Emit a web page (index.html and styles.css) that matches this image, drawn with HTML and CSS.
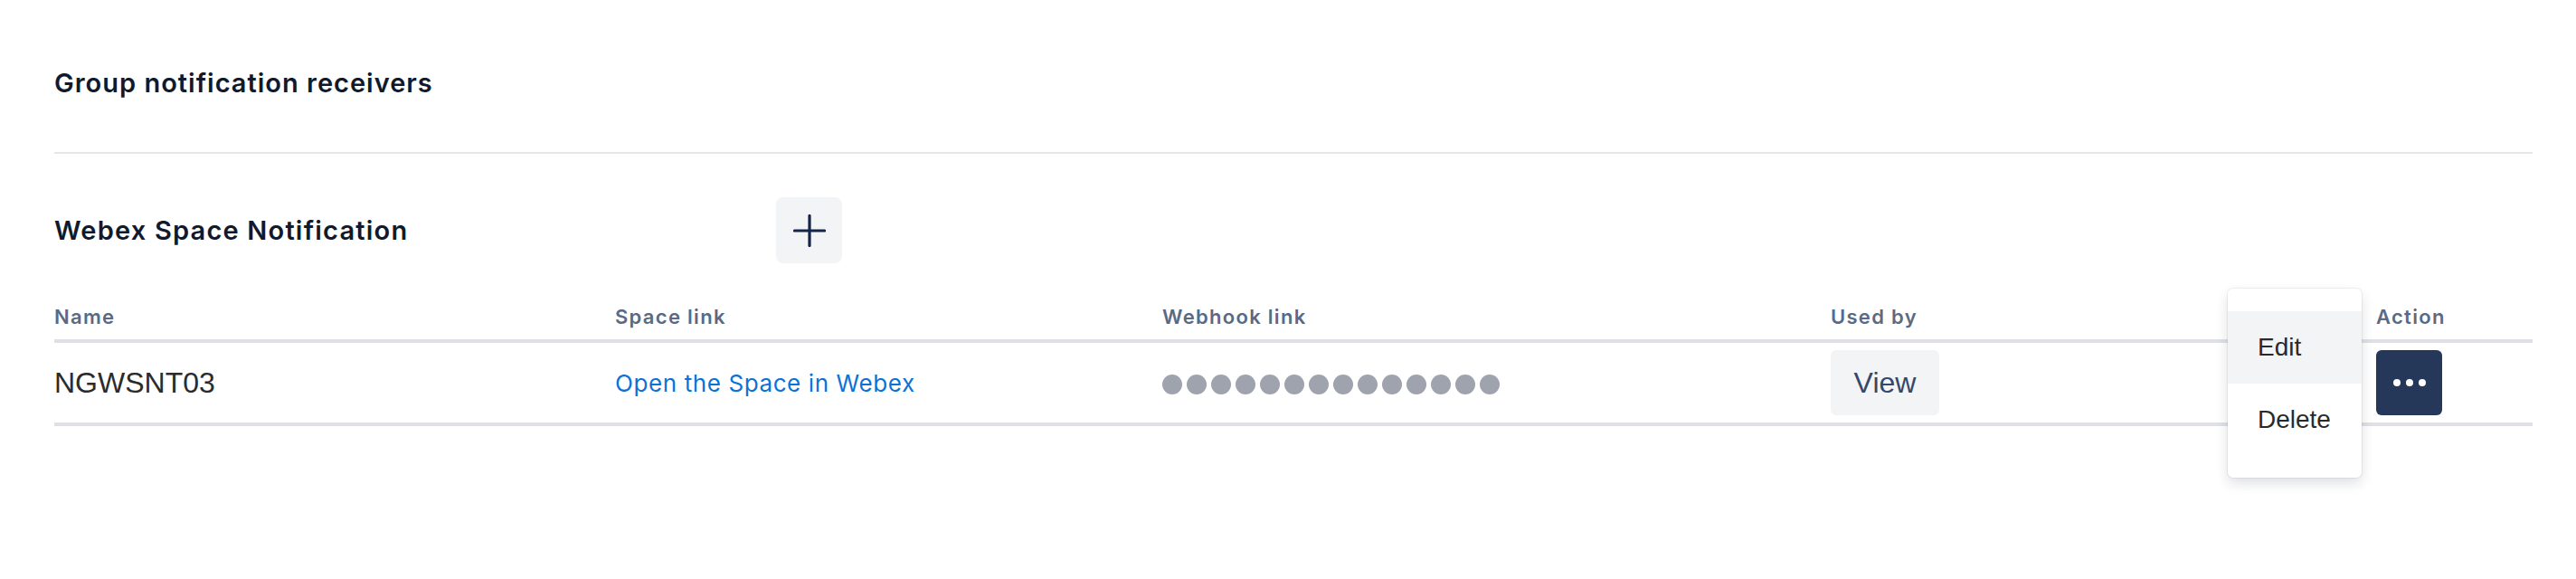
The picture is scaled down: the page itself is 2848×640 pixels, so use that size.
FILE: index.html
```html
<!DOCTYPE html>
<html lang="en">
<head>
<meta charset="utf-8">
<title>Group notification receivers</title>
<link rel="stylesheet" href="styles.css">
</head>
<body>
<main class="page">
  <section class="group-head">
    <h2 class="group-title">Group notification receivers</h2>
  </section>
  <section class="webex">
    <div class="webex-head">
      <h3 class="webex-title">Webex Space Notification</h3>
      <button class="add-btn" type="button" aria-label="Add">
        <svg width="36" height="36" viewBox="0 0 36 36"><path d="M18 1.5V34.5M1.5 18H34.5" stroke="#14264a" stroke-width="3.2" stroke-linecap="round" fill="none"/></svg>
      </button>
    </div>
    <div class="table">
      <div class="row head">
        <div class="cell">Name</div>
        <div class="cell">Space link</div>
        <div class="cell">Webhook link</div>
        <div class="cell">Used by</div>
        <div class="cell">Action</div>
      </div>
      <div class="row body">
        <div class="cell name">NGWSNT03</div>
        <div class="cell"><a class="link" href="#">Open the Space in Webex</a></div>
        <div class="cell"><span class="dots"><i></i><i></i><i></i><i></i><i></i><i></i><i></i><i></i><i></i><i></i><i></i><i></i><i></i><i></i></span></div>
        <div class="cell"><button class="view-btn" type="button">View</button></div>
        <div class="cell action">
          <button class="more-btn" type="button" aria-label="More"><span></span><span></span><span></span></button>
          <div class="menu">
            <div class="menu-item active">Edit</div>
            <div class="menu-item">Delete</div>
          </div>
        </div>
      </div>
    </div>
  </section>
</main>
</body>
</html>
```
FILE: styles.css
```css
html, body {
  margin: 0;
  padding: 0;
  background: #ffffff;
}
body {
  font-family: Inter, "Noto Sans", sans-serif;
  min-height: 640px;
}
.page {
  padding-left: 60px;
  padding-bottom: 160px;
  width: 2740px;
}
.group-head {
  padding-top: 74px;
  padding-bottom: 58px;
  border-bottom: 2px solid #e6e6e8;
}
.group-title {
  margin: 0;
  font-size: 29px;
  line-height: 36px;
  font-weight: 600;
  letter-spacing: 1px;
  color: #111a2c;
}
.webex {
  padding-top: 48px;
}
.webex-head {
  display: flex;
  align-items: center;
  height: 73px;
}
.webex-title {
  margin: 0;
  width: 798px;
  font-size: 29px;
  line-height: 36px;
  font-weight: 600;
  letter-spacing: 1.2px;
  color: #111a2c;
}
.add-btn {
  width: 73px;
  height: 73px;
  border: 0;
  border-radius: 8px;
  background: #f3f4f6;
  display: flex;
  align-items: center;
  justify-content: center;
  padding: 0;
}
.table {
  margin-top: 45px;
}
.row {
  display: grid;
  grid-template-columns: 620px 605px 739px 603px 173px;
}
.row.head {
  padding-bottom: 11px;
  border-bottom: 4px solid #dfe0e6;
}
.row.head .cell {
  font-size: 22px;
  line-height: 28px;
  font-weight: 600;
  letter-spacing: 1.3px;
  color: #5a6a85;
}
.row.body {
  height: 88px;
  align-items: center;
  border-bottom: 4px solid #dfe0e6;
}
.cell {
  display: flex;
  align-items: center;
}
.name {
  font-family: "Liberation Sans", Arial, sans-serif;
  font-size: 32px;
  color: #2b2b2b;
}
.link {
  font-size: 26px;
  color: #0b72d6;
  text-decoration: none;
  letter-spacing: 0.6px;
}
.dots {
  display: flex;
  gap: 5px;
  padding-top: 4px;
}
.dots i {
  display: block;
  width: 22px;
  height: 22px;
  border-radius: 50%;
  background: #9ea3ae;
}
.view-btn {
  width: 120px;
  height: 72px;
  border: 0;
  border-radius: 6px;
  background: #f3f4f6;
  font-family: "Liberation Sans", Arial, sans-serif;
  font-size: 32px;
  color: #34486b;
  padding: 0;
}
.action {
  position: relative;
  height: 88px;
}
.more-btn {
  width: 73px;
  height: 72px;
  border: 0;
  border-radius: 6px;
  background: #263859;
  display: flex;
  align-items: center;
  justify-content: center;
  gap: 6px;
  padding: 0;
}
.more-btn span {
  display: block;
  width: 8px;
  height: 8px;
  border-radius: 50%;
  background: #ffffff;
}
.menu {
  position: absolute;
  z-index: 10;
  left: -164px;
  top: -60px;
  width: 148px;
  padding: 25px 0 24px;
  background: #ffffff;
  border-radius: 6px;
  box-shadow: 0 0 0 1px rgba(20, 30, 50, 0.06), 0 6px 14px rgba(20, 30, 50, 0.14);
}
.menu-item {
  height: 80px;
  line-height: 80px;
  padding-left: 33px;
  font-family: "Liberation Sans", Arial, sans-serif;
  font-size: 28px;
  color: #2a2a2a;
}
.menu-item.active {
  background: #f3f4f6;
}
```
